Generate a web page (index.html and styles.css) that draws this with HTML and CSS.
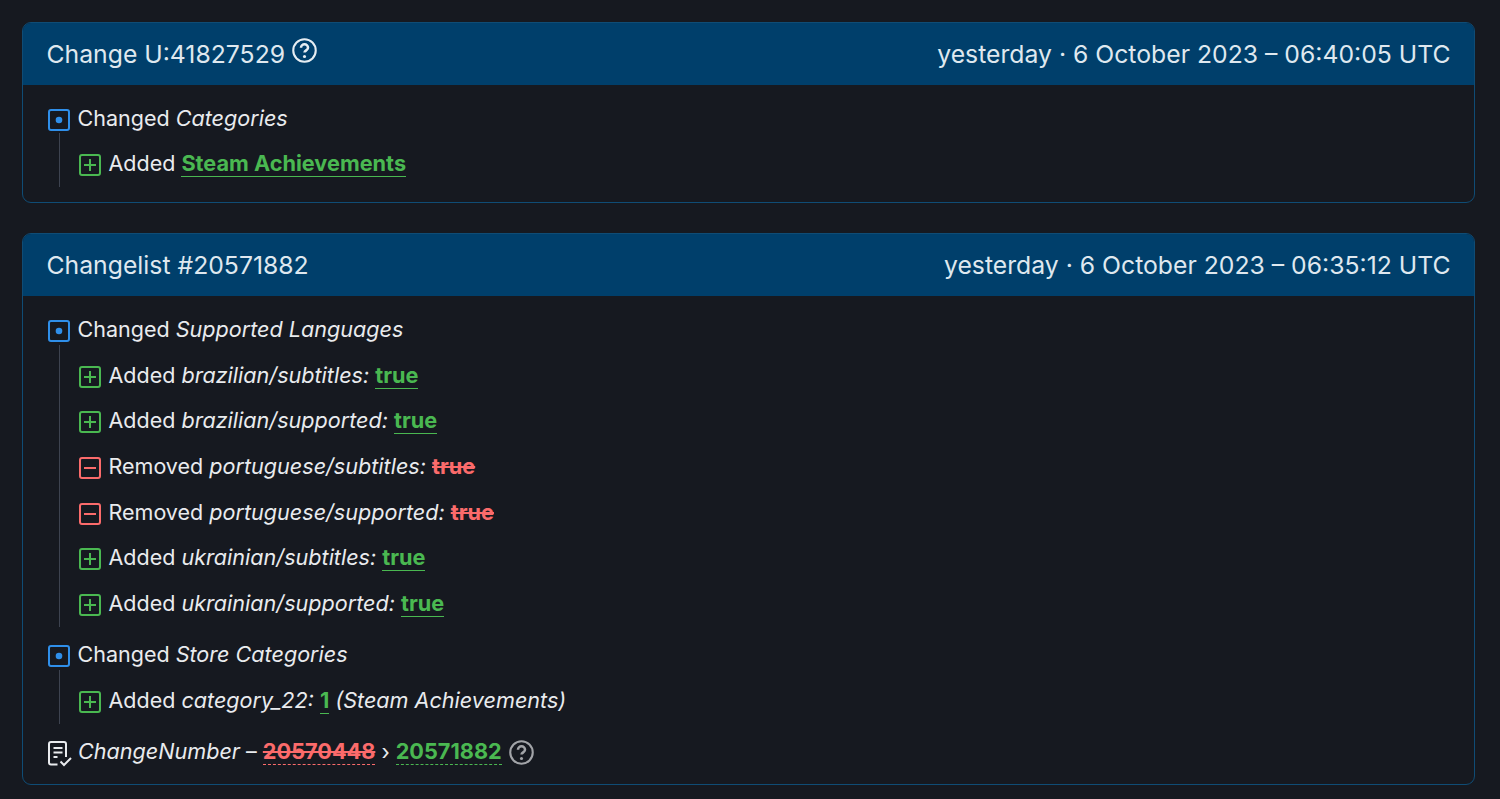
FILE: index.html
```html
<!DOCTYPE html>
<html lang="en">
<head>
    <meta charset="UTF-8">
    <title>Changes</title>
    <link rel="stylesheet" href="styles.css">
</head>
<body>

<svg class="defs" width="0" height="0">
    <symbol id="i-changed" viewBox="0 0 22 22">
        <rect x="1" y="1" width="20" height="20" rx="2" fill="none" stroke="currentColor" stroke-width="2"/>
        <circle cx="11" cy="11" r="3.3" fill="currentColor"/>
    </symbol>
    <symbol id="i-added" viewBox="0 0 22 22">
        <rect x="1" y="1" width="20" height="20" rx="2" fill="none" stroke="currentColor" stroke-width="2"/>
        <path d="M11 5v12M5 11h12" fill="none" stroke="currentColor" stroke-width="2"/>
    </symbol>
    <symbol id="i-removed" viewBox="0 0 22 22">
        <rect x="1" y="1" width="20" height="20" rx="2" fill="none" stroke="currentColor" stroke-width="2"/>
        <path d="M5 11h12" fill="none" stroke="currentColor" stroke-width="2"/>
    </symbol>
    <symbol id="i-help" viewBox="0 0 24 24">
        <circle cx="12" cy="12" r="10.8" fill="none" stroke="currentColor" stroke-width="2"/>
        <path d="M8.6 9.4a3.4 3.4 0 0 1 6.8 0c0 2.3-3.4 2.6-3.4 4.6" fill="none" stroke="currentColor" stroke-width="2.4"/>
        <circle cx="12" cy="17.8" r="1.5" fill="currentColor"/>
    </symbol>
</svg>

<section class="card">
    <header class="card-head">
        <span>Change U:41827529 <svg class="help"><use href="#i-help"/></svg></span>
        <span>yesterday · 6 October 2023 – 06:40:05 UTC</span>
    </header>
    <div class="card-body">
        <div class="group">
            <div class="row"><svg class="ico blue"><use href="#i-changed"/></svg>Changed <i>Categories</i></div>
            <div class="sub">
                <div class="row"><svg class="ico green"><use href="#i-added"/></svg>Added <b class="val add">Steam Achievements</b></div>
            </div>
        </div>
    </div>
</section>

<section class="card">
    <header class="card-head">
        <span>Changelist #20571882</span>
        <span>yesterday · 6 October 2023 – 06:35:12 UTC</span>
    </header>
    <div class="card-body">
        <div class="group">
            <div class="row"><svg class="ico blue"><use href="#i-changed"/></svg>Changed <i>Supported Languages</i></div>
            <div class="sub">
                <div class="row"><svg class="ico green"><use href="#i-added"/></svg>Added <i>brazilian/subtitles:</i> <b class="val add">true</b></div>
                <div class="row"><svg class="ico green"><use href="#i-added"/></svg>Added <i>brazilian/supported:</i> <b class="val add">true</b></div>
                <div class="row"><svg class="ico red"><use href="#i-removed"/></svg>Removed <i>portuguese/subtitles:</i> <b class="val del">true</b></div>
                <div class="row"><svg class="ico red"><use href="#i-removed"/></svg>Removed <i>portuguese/supported:</i> <b class="val del">true</b></div>
                <div class="row"><svg class="ico green"><use href="#i-added"/></svg>Added <i>ukrainian/subtitles:</i> <b class="val add">true</b></div>
                <div class="row"><svg class="ico green"><use href="#i-added"/></svg>Added <i>ukrainian/supported:</i> <b class="val add">true</b></div>
            </div>
        </div>
        <div class="group">
            <div class="row"><svg class="ico blue"><use href="#i-changed"/></svg>Changed <i>Store Categories</i></div>
            <div class="sub">
                <div class="row"><svg class="ico green"><use href="#i-added"/></svg>Added <i>category_22:</i> <b class="val add">1</b> <i>(Steam Achievements)</i></div>
            </div>
        </div>
        <div class="row number-row"><svg class="ico-doc" viewBox="0 0 24 26">
                <path d="M9.5 23.5H3a2 2 0 0 1-2-2V3a2 2 0 0 1 2-2h13a2 2 0 0 1 2 2v13" fill="none" stroke="currentColor" stroke-width="2"/>
                <path d="M5.5 7h9M5.5 11.5h9M5.5 16h4" fill="none" stroke="currentColor" stroke-width="2"/>
                <path d="M12.5 20.5l3.5 3.5 7-7" fill="none" stroke="currentColor" stroke-width="2"/>
            </svg><i>ChangeNumber</i> – <b class="val del dotted">20570448</b> › <b class="val add dotted">20571882</b> <svg class="help grey"><use href="#i-help"/></svg></div>
    </div>
</section>

</body>
</html>
```

FILE: styles.css
```css
body {
    margin: 0;
    padding: 22px 25px 0 22px;
    background: #161920;
    color: #e9ebee;
    font-family: "Inter", "Liberation Sans", sans-serif;
    font-size: 21.5px;
    overflow: hidden;
}

.defs { position: absolute; }

.card {
    border: 1px solid #0f4c75;
    border-radius: 9px;
    overflow: hidden;
    margin-bottom: 30px;
}

.card-head {
    display: flex;
    justify-content: space-between;
    align-items: center;
    height: 61.5px;
    padding: 0 23.5px;
    background: #003f6b;
    color: #dfe8ef;
    font-size: 24.75px;
}

.help { width: 25px; height: 25px; vertical-align: 0; color: #e6edf2; }
.help.grey { margin-left: 1px; vertical-align: -6px; color: #a2a4a8; }

.card-body { padding: 11px 24px 10px; }

.row {
    height: 45.7px;
    line-height: 45.7px;
    white-space: nowrap;
}

.row i { font-size: 21.6px; }

.ico {
    width: 22px;
    height: 22px;
    margin: 0 7.5px 0 1px;
    vertical-align: -5px;
}

.ico-doc {
    width: 24px;
    height: 26px;
    margin: 0 6px 0 1px;
    vertical-align: -8px;
    color: #e9ebee;
}

.blue { color: #2f8fea; }
.green { color: #4ab851; }
.red { color: #fb6b6b; }

.sub {
    margin: -8px 0 0 12px;
    padding: 8px 0 0 18px;
    border-left: 1px solid #3d4350;
}

.group { margin-bottom: 5.5px; }

.val { font-size: 21.7px; font-weight: 700; }
.add { color: #4ab851; border-bottom: 1px solid #4ab851; }
.del { color: #fb6b6b; text-decoration: line-through; }
.dotted { border-bottom: 1px dashed currentColor; }

.number-row { margin: 1.6px 0 -0.6px; }
```
